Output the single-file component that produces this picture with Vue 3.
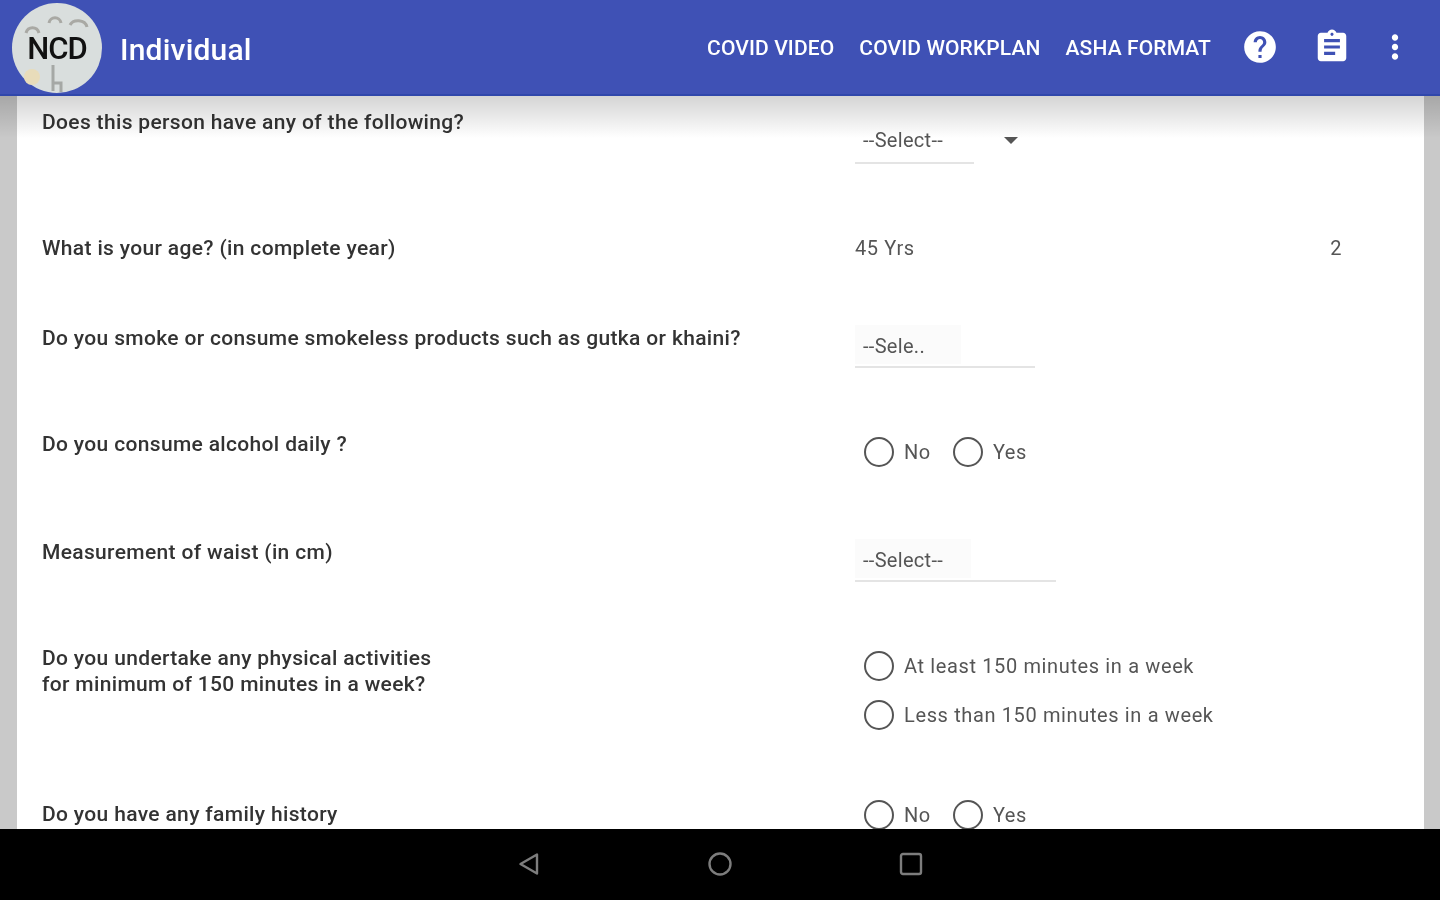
<script setup>
const links = ['COVID VIDEO', 'COVID WORKPLAN', 'ASHA FORMAT']
const rows = [
  { cls: 'r1', q: ['Does this person have any of the following?'], type: 'select1' },
  { cls: 'r2', q: ['What is your age? (in complete year)'], type: 'age' },
  { cls: 'r3', q: ['Do you smoke or consume smokeless products such as gutka or khaini?'], type: 'select2' },
  { cls: 'r4', q: ['Do you consume alcohol daily ?'], type: 'yesno' },
  { cls: 'r5', q: ['Measurement of waist (in cm)'], type: 'select3' },
  { cls: 'r6', q: ['Do you undertake any physical activities', 'for minimum of 150 minutes in a week?'], type: 'list' },
  { cls: 'r7', q: ['Do you have any family history'], type: 'yesno' }
]
const activity = ['At least 150 minutes in a week', 'Less than 150 minutes in a week']
</script>

<template>
  <div class="screen">
    <header class="bar">
      <div class="logo">
        <svg class="logo-art" viewBox="0 0 90 90" width="90" height="90" aria-hidden="true">
          <circle cx="45" cy="45" r="45" fill="#d9dedd" />
          <path d="M14 30c2-7 11-7 13 0M37 20c1-7 11-7 12 0M58 22c3-6 15-6 17 2" fill="none" stroke="#a9a9a4" stroke-width="3" />
          <path d="M41 62v26M41 80h8v9" fill="none" stroke="#a5a8a5" stroke-width="3" />
          <circle cx="20" cy="74" r="8" fill="#e8dcba" />
        </svg>
        <span class="logo-text">NCD</span>
      </div>
      <h1 class="title">Individual</h1>
      <nav class="links">
        <a v-for="l in links" :key="l" class="link">{{ l }}</a>
      </nav>
      <div class="icons">
        <svg class="icon help" viewBox="0 0 24 24"><path d="M12 2C6.48 2 2 6.48 2 12s4.48 10 10 10 10-4.48 10-10S17.52 2 12 2zm1 17h-2v-2h2v2zm2.07-7.75l-.9.92C13.45 12.9 13 13.5 13 15h-2v-.5c0-1.1.45-2.1 1.17-2.83l1.24-1.26c.37-.36.59-.86.59-1.41 0-1.1-.9-2-2-2s-2 .9-2 2H8c0-2.21 1.79-4 4-4s4 1.79 4 4c0 .88-.36 1.68-.93 2.25z" /></svg>
        <svg class="icon clip" viewBox="0 0 24 24"><path d="M19 3h-4.18C14.4 1.84 13.3 1 12 1c-1.3 0-2.4.84-2.82 2H5c-1.1 0-2 .9-2 2v14c0 1.1.9 2 2 2h14c1.1 0 2-.9 2-2V5c0-1.1-.9-2-2-2zm-7 0c.55 0 1 .45 1 1s-.45 1-1 1-1-.45-1-1 .45-1 1-1zm2 14H7v-2h7v2zm3-4H7v-2h10v2zm0-4H7V7h10v2z" /></svg>
        <svg class="icon more" viewBox="0 0 24 24"><path d="M12 8c1.1 0 2-.9 2-2s-.9-2-2-2-2 .9-2 2 .9 2 2 2zm0 2c-1.1 0-2 .9-2 2s.9 2 2 2 2-.9 2-2-.9-2-2-2zm0 6c-1.1 0-2 .9-2 2s.9 2 2 2 2-.9 2-2-.9-2-2-2z" /></svg>
      </div>
    </header>

    <main class="body">
      <section class="card">
        <div v-for="r in rows" :key="r.cls" class="row" :class="r.cls">
          <div class="question">
            <p v-for="line in r.q" :key="line">{{ line }}</p>
          </div>
          <div class="answer">
            <div v-if="r.type === 'select1'" class="select s1">
              <span>--Select--</span>
              <i class="caret"></i>
            </div>
            <div v-else-if="r.type === 'age'" class="age">
              <span>45 Yrs</span>
              <span class="num">2</span>
            </div>
            <div v-else-if="r.type === 'select2'" class="select s2">
              <span class="val">--Sele..</span>
            </div>
            <div v-else-if="r.type === 'select3'" class="select s3">
              <span class="val">--Select--</span>
            </div>
            <div v-else-if="r.type === 'yesno'" class="radios">
              <label class="radio"><i class="dot"></i>No</label>
              <label class="radio"><i class="dot"></i>Yes</label>
            </div>
            <div v-else class="radio-list">
              <label v-for="a in activity" :key="a" class="radio"><i class="dot"></i>{{ a }}</label>
            </div>
          </div>
        </div>
      </section>
      <div class="shade"></div>
    </main>

    <footer class="sysnav">
      <svg viewBox="0 0 24 24" width="24" height="24"><path d="M20 2.5v19L3.5 12z" /></svg>
      <svg viewBox="0 0 24 24" width="24" height="24"><circle cx="12" cy="12" r="10.5" /></svg>
      <svg viewBox="0 0 24 24" width="24" height="24"><rect x="2" y="2" width="20" height="20" rx="2" /></svg>
    </footer>
  </div>
</template>

<style scoped>
.screen {
  width: 1440px;
  height: 900px;
  display: flex;
  flex-direction: column;
  overflow: hidden;
  font-family: Roboto, "Liberation Sans", sans-serif;
  background: #fff;
  filter: blur(0.55px);
}
.bar {
  flex: 0 0 96px;
  box-sizing: border-box;
  display: flex;
  align-items: center;
  background: #3f51b5;
  border-bottom: 2px solid #3047ab;
  padding: 2px 26px 0 12px;
  color: #fff;
  position: relative;
  z-index: 2;
}
.logo {
  width: 90px;
  height: 90px;
  position: relative;
  display: flex;
  align-items: center;
  justify-content: center;
  flex: none;
}
.logo-art {
  position: absolute;
  inset: 0;
}
.logo-text {
  position: relative;
  color: #111;
  font-size: 31px;
  font-weight: 500;
  letter-spacing: -1px;
}
.title {
  margin: 2px 0 0 18px;
  font-size: 30px;
  font-weight: 500;
  letter-spacing: 0.2px;
  flex: 1;
}
.links {
  display: flex;
  gap: 25px;
}
.link {
  font-size: 21px;
  font-weight: 500;
  letter-spacing: 0.12px;
  white-space: nowrap;
}
.icons {
  display: flex;
  align-items: center;
  margin: -2px 0 0 30px;
}
.icon {
  width: 38px;
  height: 38px;
  fill: #fff;
  display: block;
}
.clip {
  margin-left: 34px;
}
.more {
  margin-left: 25px;
}
.body {
  flex: 1;
  min-height: 0;
  position: relative;
  background: #c9c9c9;
  padding: 0 16px 0 17px;
  overflow: hidden;
}
.shade {
  position: absolute;
  left: 0;
  right: 0;
  top: 0;
  height: 42px;
  background: linear-gradient(rgba(0, 0, 0, 0.17), rgba(0, 0, 0, 0));
  pointer-events: none;
}
.card {
  height: 100%;
  background: #fff;
  box-sizing: border-box;
  padding: 13px 0 0 25px;
  color: #2b2b2b;
  font-size: 20px;
  line-height: 26px;
}
.row {
  display: flex;
}
.r1 { height: 126px; }
.r2 { height: 90px; }
.r3 { height: 106px; }
.r4 { height: 108px; }
.r5 { height: 106px; }
.r6 { height: 156px; }
.question {
  flex: 0 0 813px;
  font-size: 21px;
  letter-spacing: 0.34px;
  font-weight: 500;
  color: #333;
}
.question p {
  margin: 0;
  white-space: nowrap;
}
.answer {
  flex: 1;
  color: #555;
}
.select {
  box-sizing: border-box;
  position: relative;
  border-bottom: 2px solid #e4e4e4;
  padding-left: 8px;
  letter-spacing: 0.3px;
}
.s1 {
  width: 119px;
  margin-top: 18px;
  padding-bottom: 9px;
}
.caret {
  position: absolute;
  left: 149px;
  top: 10px;
  border: 7px solid transparent;
  border-top-color: #555;
  border-bottom-width: 0;
}
.s2 {
  width: 180px;
  padding-top: 8px;
  padding-bottom: 2px;
}
.s3 {
  width: 201px;
  padding-top: 8px;
  padding-bottom: 2px;
}
.val {
  display: block;
  margin-left: -8px;
  padding-left: 8px;
  background: #fbfbfb;
  margin-top: -8px;
  padding-top: 8px;
  padding-bottom: 5px;
}
.s2 .val { width: 98px; }
.s3 .val { width: 108px; }
.age {
  display: flex;
  width: 487px;
  justify-content: space-between;
  letter-spacing: 0.6px;
}
.radios {
  display: flex;
  gap: 22px;
  padding: 4px 0 0 9px;
  letter-spacing: 0.6px;
}
.radio-list {
  display: flex;
  flex-direction: column;
  gap: 15px;
  padding: 4px 0 0 9px;
  letter-spacing: 0.63px;
}
.radio {
  display: flex;
  align-items: center;
  gap: 10px;
  height: 34px;
  white-space: nowrap;
}
.r7 .radios {
  padding-top: 0;
  margin-top: -3px;
}
.dot {
  box-sizing: border-box;
  width: 30px;
  height: 30px;
  border: 2.5px solid #555;
  border-radius: 50%;
  flex: none;
}
.sysnav {
  flex: 0 0 71px;
  box-sizing: border-box;
  padding-bottom: 2px;
  background: #000;
  display: flex;
  align-items: center;
  justify-content: center;
  gap: 167px;
  position: relative;
  z-index: 2;
}
.sysnav svg {
  fill: none;
  stroke: #7d7d7d;
  stroke-width: 2.4;
  stroke-linejoin: round;
}
</style>

<style>
html, body {
  margin: 0;
  background: #fff;
}
</style>
